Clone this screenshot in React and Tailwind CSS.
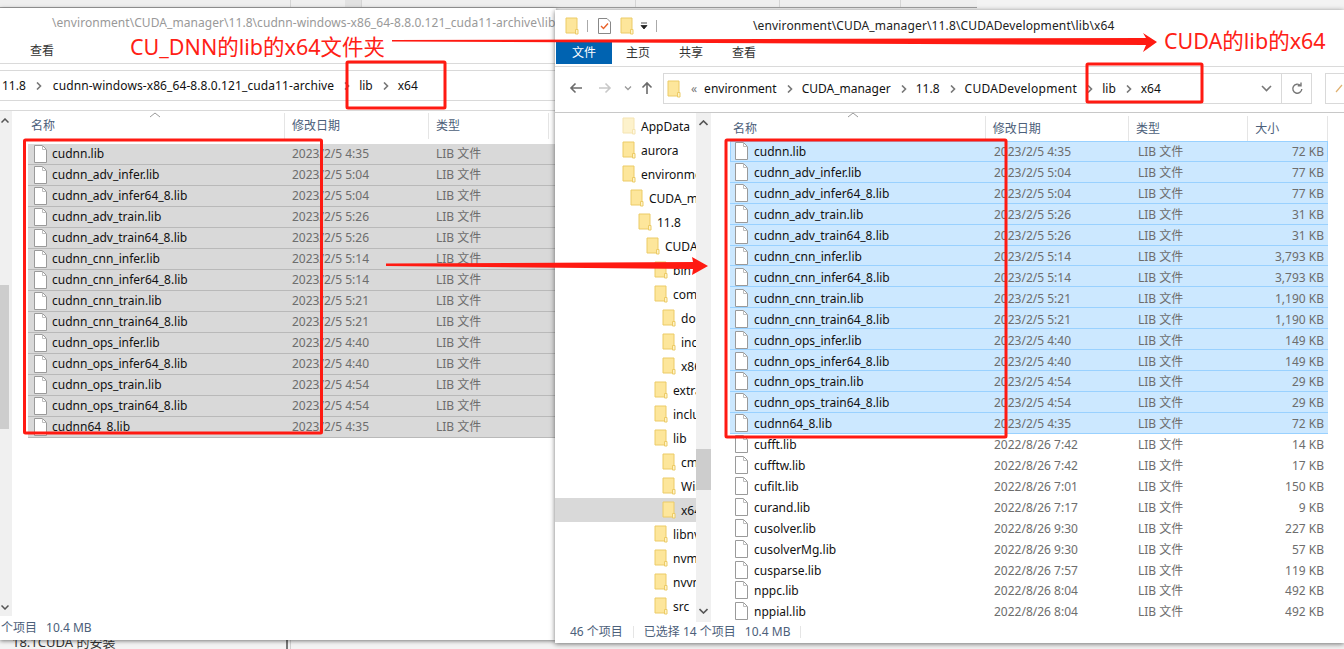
const FONT = "font-['Noto_Sans','Noto_Sans_CJK_SC',sans-serif]";

const selected = [
  ["cudnn.lib", "2023/2/5 4:35", "72 KB"],
  ["cudnn_adv_infer.lib", "2023/2/5 5:04", "77 KB"],
  ["cudnn_adv_infer64_8.lib", "2023/2/5 5:04", "77 KB"],
  ["cudnn_adv_train.lib", "2023/2/5 5:26", "31 KB"],
  ["cudnn_adv_train64_8.lib", "2023/2/5 5:26", "31 KB"],
  ["cudnn_cnn_infer.lib", "2023/2/5 5:14", "3,793 KB"],
  ["cudnn_cnn_infer64_8.lib", "2023/2/5 5:14", "3,793 KB"],
  ["cudnn_cnn_train.lib", "2023/2/5 5:21", "1,190 KB"],
  ["cudnn_cnn_train64_8.lib", "2023/2/5 5:21", "1,190 KB"],
  ["cudnn_ops_infer.lib", "2023/2/5 4:40", "149 KB"],
  ["cudnn_ops_infer64_8.lib", "2023/2/5 4:40", "149 KB"],
  ["cudnn_ops_train.lib", "2023/2/5 4:54", "29 KB"],
  ["cudnn_ops_train64_8.lib", "2023/2/5 4:54", "29 KB"],
  ["cudnn64_8.lib", "2023/2/5 4:35", "72 KB"],
];

const others = [
  ["cufft.lib", "2022/8/26 7:42", "14 KB"],
  ["cufftw.lib", "2022/8/26 7:42", "17 KB"],
  ["cufilt.lib", "2022/8/26 7:01", "150 KB"],
  ["curand.lib", "2022/8/26 7:17", "9 KB"],
  ["cusolver.lib", "2022/8/26 9:30", "227 KB"],
  ["cusolverMg.lib", "2022/8/26 9:30", "57 KB"],
  ["cusparse.lib", "2022/8/26 7:57", "119 KB"],
  ["nppc.lib", "2022/8/26 8:04", "492 KB"],
  ["nppial.lib", "2022/8/26 8:04", "492 KB"],
];

const tree = [
  ["AppData", "pl-[67px]", true],
  ["aurora", "pl-[67px]"],
  ["environment", "pl-[67px]"],
  ["CUDA_manager", "pl-[75px]"],
  ["11.8", "pl-[83px]"],
  ["CUDADevelopment", "pl-[91px]"],
  ["bin", "pl-[99px]"],
  ["compute", "pl-[99px]"],
  ["doc", "pl-[107px]"],
  ["include", "pl-[107px]"],
  ["x86", "pl-[107px]"],
  ["extras", "pl-[99px]"],
  ["include", "pl-[99px]"],
  ["lib", "pl-[99px]"],
  ["cmake", "pl-[107px]"],
  ["Win32", "pl-[107px]"],
  ["x64", "pl-[107px]", false, true],
  ["libnvvp", "pl-[99px]"],
  ["nvml", "pl-[99px]"],
  ["nvvm", "pl-[99px]"],
  ["src", "pl-[99px]"],
];

function FolderIcon({ faded }) {
  return (
    <svg width="14" height="18" viewBox="0 0 14 18" className={`shrink-0 ${faded ? "opacity-50" : ""}`}>
      <path d="M1 1H12V16H1Z" fill="#fde69b" stroke="#eccb66" />
      <path d="M10.5 12.5H13V17H10.5Z" fill="#fff3c8" stroke="#eccb66" />
    </svg>
  );
}

function FileIcon() {
  return (
    <svg width="13" height="18" viewBox="0 0 13 18" className="shrink-0">
      <path d="M.5.5H8.5L12.5 4.5V17.5H.5Z" fill="#fff" stroke="#9a9a9a" />
      <path d="M8.5.5V4.5H12.5" fill="none" stroke="#bdbdbd" />
    </svg>
  );
}

function Chevron({ className = "ml-[10px] mr-[9px]" }) {
  return (
    <svg width="6" height="8" viewBox="0 0 6 8" className={`shrink-0 ${className}`}>
      <path d="M1 0.5L4.5 4L1 7.5" fill="none" stroke="#777" strokeWidth="1.6" />
    </svg>
  );
}

function SortCaret() {
  return (
    <svg width="12" height="6" viewBox="0 0 12 6" className="absolute top-[-1px]">
      <path d="M1 5L6 1L11 5" fill="none" stroke="#9a9a9a" />
    </svg>
  );
}

function LeftRow({ name, date }) {
  return (
    <div className="flex items-center h-[21px] bg-[#d9d9d9] border-b border-[#b9b9b9] pl-[6px] text-[12px]">
      <FileIcon />
      <span className="ml-[5px] w-[240px] text-[#111] whitespace-nowrap">{name}</span>
      <span className="w-[144px] text-[#6d6d6d]">{date}</span>
      <span className="text-[#6d6d6d]">LIB 文件</span>
    </div>
  );
}

function RightRow({ name, date, size, sel, first }) {
  const rowClass = sel
    ? `bg-[#cce8ff] shadow-[inset_0_-1px_0_#99d1ff] ${first ? "outline outline-1 -outline-offset-1 outline-[#99d1ff]" : ""}`
    : "bg-white";
  return (
    <div className={`flex items-center h-[21px] pl-[5px] pr-[4px] text-[12px] ${rowClass}`}>
      <FileIcon />
      <span className="ml-[6px] mt-[2px] w-[240px] text-[#111] whitespace-nowrap">{name}</span>
      <span className="mt-[2px] w-[144px] text-[#6d6d6d] whitespace-nowrap">{date}</span>
      <span className="mt-[2px] w-[100px] text-[#6d6d6d]">LIB 文件</span>
      <span className="mt-[2px] flex-1 text-right text-[#6d6d6d] whitespace-nowrap">{size}</span>
    </div>
  );
}

function HeaderCell({ label, className }) {
  return (
    <div className={`h-full flex items-center pl-[7px] border-r border-[#e5e5e5] text-[12px] text-[#4c607a] ${className}`}>
      {label}
    </div>
  );
}

function LeftWindow() {
  return (
    <div className="absolute left-0 top-[8px] w-[556px] h-[632px] bg-white shadow-[0_1px_4px_rgba(0,0,0,0.5)] flex flex-col overflow-hidden">
      <div className="h-[30px] shrink-0 pl-[52px] pt-[6px] text-[12px] tracking-[0.06px] text-[#999] whitespace-nowrap">
        \environment\CUDA_manager\11.8\cudnn-windows-x86_64-8.8.0.121_cuda11-archive\lib
      </div>
      <div className="h-[26px] shrink-0 pl-[30px] pt-[4px] text-[12px] text-[#333] border-b border-[#dadada]">查看</div>
      <div className="h-[46px] shrink-0 flex items-start pt-[6px]">
        <div className="w-full h-[31px] border-y border-[#d9d9d9] flex items-center pl-[2px] text-[12px] text-[#111] whitespace-nowrap">
          <span>11.8</span>
          <Chevron className="ml-[10px] mr-[11px]" />
          <span className="tracking-[0.09px]">cudnn-windows-x86_64-8.8.0.121_cuda11-archive</span>
          <Chevron className="ml-[10px] mr-[9px]" />
          <span>lib</span>
          <Chevron className="ml-[10px] mr-[9px]" />
          <span>x64</span>
        </div>
      </div>
      <div className="flex-1 flex min-h-0 border-t border-[#d9d9d9]">
        <div className="w-[12px] shrink-0 bg-[#f0f0f0] flex flex-col">
          <svg width="8" height="5" viewBox="0 0 8 5" className="ml-[1px] mt-[7px]">
            <path d="M.5 4.5L4 1L7.5 4.5" fill="none" stroke="#555" strokeWidth="1.5" />
          </svg>
          <div className="mt-[162px] w-[9px] h-[144px] bg-[#cdcdcd]" />
          <svg width="8" height="5" viewBox="0 0 8 5" className="ml-[1px] mt-auto mb-[6px]">
            <path d="M.5.5L4 4L7.5.5" fill="none" stroke="#555" strokeWidth="1.5" />
          </svg>
        </div>
        <div className="flex-1 flex flex-col min-w-0">
          <div className="relative h-[33px] shrink-0 flex items-stretch pl-[12px] pt-[2px] pb-[5px]">
            <div className="absolute left-[137px] top-[2px] w-[12px]">
              <SortCaret />
            </div>
            <HeaderCell label="名称" className="w-[261px]" />
            <HeaderCell label="修改日期" className="w-[144px]" />
            <HeaderCell label="类型" className="w-[120px]" />
          </div>
          <div className="pl-[16px]">
            {selected.map((f) => (
              <LeftRow key={f[0]} name={f[0]} date={f[1]} />
            ))}
          </div>
        </div>
      </div>
      <div className="h-[24px] shrink-0 flex items-center pl-[1px] text-[12px] text-[#4c607a] bg-white">
        <span>个项目</span>
        <span className="ml-[9px]">10.4 MB</span>
      </div>
    </div>
  );
}

function RightWindow() {
  return (
    <div className="absolute left-[555px] top-[10px] right-0 h-[633px] bg-white shadow-[0_1px_5px_rgba(0,0,0,0.55)] flex flex-col overflow-hidden">
      <div className="h-[31px] shrink-0 flex items-center pl-[10px] text-[12px] text-[#222]">
        <FolderIcon />
        <span className="w-px h-[12px] bg-[#aaa] ml-[8px] mr-[10px]" />
        <svg width="13" height="16" viewBox="0 0 13 16" className="mr-[9px]">
          <path d="M.5.5H9L12.5 4V15.5H.5Z" fill="#fff" stroke="#888" />
          <path d="M3 8L5.5 10.5L10 5.5" fill="none" stroke="#e8622a" strokeWidth="1.4" />
        </svg>
        <FolderIcon />
        <svg width="8" height="8" viewBox="0 0 8 8" className="ml-[6px]">
          <path d="M1 1H7M1 3.5H7L4 7Z" fill="#222" stroke="#222" strokeWidth="0.8" />
        </svg>
        <span className="w-px h-[12px] bg-[#aaa] ml-[8px]" />
        <span className="ml-[96px] tracking-[0.14px] whitespace-nowrap">\environment\CUDA_manager\11.8\CUDADevelopment\lib\x64</span>
      </div>
      <div className="h-[26px] shrink-0 flex items-start pl-px text-[12px] text-[#333] border-b border-[#dadada]">
        <div className="w-[56px] h-[23px] bg-[#0063b1] text-white flex items-center justify-center">文件</div>
        <div className="ml-[14px] h-[23px] flex items-center">主页</div>
        <div className="ml-[29px] h-[23px] flex items-center">共享</div>
        <div className="ml-[29px] h-[23px] flex items-center">查看</div>
      </div>
      <div className="h-[46px] shrink-0 flex items-start pt-[6px] border-b border-[#c8c8c8]">
        <svg width="14" height="12" viewBox="0 0 14 12" className="ml-[14px] mt-[9px]">
          <path d="M13 6H2M6.5 1.5L2 6L6.5 10.5" fill="none" stroke="#6b6b6b" strokeWidth="1.6" />
        </svg>
        <svg width="14" height="12" viewBox="0 0 14 12" className="ml-[15px] mt-[9px]">
          <path d="M1 6H12M7.5 1.5L12 6L7.5 10.5" fill="none" stroke="#c8c8c8" strokeWidth="1.6" />
        </svg>
        <svg width="8" height="5" viewBox="0 0 8 5" className="ml-[12px] mt-[13px]">
          <path d="M1 .5L4 3.5L7 .5" fill="none" stroke="#999" strokeWidth="1.3" />
        </svg>
        <svg width="12" height="14" viewBox="0 0 12 14" className="ml-[9px] mt-[8px]">
          <path d="M6 13V2M1.5 6.5L6 2L10.5 6.5" fill="none" stroke="#6b6b6b" strokeWidth="1.6" />
        </svg>
        <div className="ml-[10px] w-[649px] h-[31px] border border-[#d9d9d9] flex items-center pl-[3px] text-[12px] text-[#111] whitespace-nowrap">
          <FolderIcon />
          <span className="ml-[10px] text-[#777]">«</span>
          <span className="ml-[7px]">environment</span>
          <Chevron />
          <span>CUDA_manager</span>
          <Chevron />
          <span>11.8</span>
          <Chevron />
          <span className="tracking-[0.3px]">CUDADevelopment</span>
          <Chevron />
          <span>lib</span>
          <Chevron />
          <span>x64</span>
          <div className="ml-auto flex items-center h-full">
            <svg width="11" height="7" viewBox="0 0 11 7" className="mr-[9px]">
              <path d="M1 1L5.5 5.5L10 1" fill="none" stroke="#777" strokeWidth="1.6" />
            </svg>
          </div>
          <div className="w-[30px] h-full border-l border-[#d9d9d9] flex items-center justify-center">
            <svg width="12" height="13" viewBox="0 0 12 13">
              <path d="M9.5 3.5A4.5 4.5 0 1 0 10.8 7M10 .5V3.8H6.7" fill="none" stroke="#777" strokeWidth="1.4" />
            </svg>
          </div>
        </div>
        <div className="ml-[13px] flex-1 h-[31px] border-y border-l border-[#d9d9d9] flex items-center justify-end pr-[1px]">
          <svg width="9" height="10" viewBox="0 0 9 10">
            <path d="M8 1L2 8" stroke="#e0b070" strokeWidth="1.2" />
          </svg>
        </div>
      </div>
      <div className="flex-1 flex min-h-0">
        <div className="w-[141px] shrink-0 overflow-hidden pt-[1px] text-[12px] text-[#111]">
          {tree.map((t) => (
            <div
              key={t[0] + t[1]}
              className={`flex items-center h-[24px] whitespace-nowrap overflow-hidden ${t[1]} ${t[3] ? "bg-[#d9d9d9]" : ""}`}
            >
              <FolderIcon faded={t[2]} />
              <span className="ml-[5px] mt-[1px]">{t[0]}</span>
            </div>
          ))}
        </div>
        <div className="w-[15px] shrink-0 bg-[#f0f0f0] flex flex-col items-center">
          <svg width="9" height="6" viewBox="0 0 9 6" className="mt-[7px]">
            <path d="M.5 5L4.5 1L8.5 5" fill="none" stroke="#555" strokeWidth="1.6" />
          </svg>
          <div className="mt-[323px] w-full h-[41px] bg-[#cdcdcd]" />
          <svg width="9" height="6" viewBox="0 0 9 6" className="mt-auto mb-[8px]">
            <path d="M.5 1L4.5 5L8.5 1" fill="none" stroke="#555" strokeWidth="1.6" />
          </svg>
        </div>
        <div className="flex-1 min-w-0 flex flex-col overflow-hidden pl-[19px] pr-[16px]">
          <div className="relative h-[28px] shrink-0 flex items-stretch pt-[3px] -ml-[4px]">
            <div className="absolute left-[121px] top-0 w-[12px]">
              <SortCaret />
            </div>
            <HeaderCell label="名称" className="w-[261px]" />
            <HeaderCell label="修改日期" className="w-[144px]" />
            <HeaderCell label="类型" className="w-[120px]" />
            <HeaderCell label="大小" className="w-[80px]" />
          </div>
          {selected.map((f, i) => (
            <RightRow key={f[0]} name={f[0]} date={f[1]} size={f[2]} sel first={i === 0} />
          ))}
          {others.map((f) => (
            <RightRow key={f[0]} name={f[0]} date={f[1]} size={f[2]} />
          ))}
        </div>
      </div>
      <div className="h-[21px] shrink-0 flex items-center pl-[15px] pb-[2px] text-[12px] text-[#4c607a] bg-white">
        <span>46 个项目</span>
        <span className="w-px h-[12px] bg-[#e5e5e5] mx-[10px]" />
        <span>已选择 14 个项目</span>
        <span className="ml-[9px]">10.4 MB</span>
        <span className="w-px h-[12px] bg-[#e5e5e5] ml-[10px]" />
      </div>
    </div>
  );
}

function Annotations() {
  return (
    <>
      <svg width="1344" height="649" viewBox="0 0 1344 649" className="absolute left-0 top-0 pointer-events-none">
        <g fill="none" stroke="#ff1a12" strokeWidth="3" strokeLinejoin="round">
          <rect x="24.5" y="140" width="297" height="293" rx="1" />
          <rect x="347" y="62" width="98" height="46" rx="1" />
          <rect x="726" y="140" width="280" height="297" rx="1" />
          <rect x="1087" y="64" width="115" height="38" rx="1" />
        </g>
        <path d="M392 40L1146 38L1143 33L1157 42L1143 52L1146 45L392 41.5Z" fill="#ff1a12" />
        <path d="M386 263.5L693 262L692 257L708 266L692 275L693 269L386 266Z" fill="#ff1a12" />
      </svg>
      <div className="absolute left-[130px] top-[33px] text-[21.5px] leading-[28px] text-[#ff2015] whitespace-nowrap">
        CU_DNN的lib的x64文件夹
      </div>
      <div className="absolute left-[1164px] top-[27px] text-[21.5px] leading-[28px] text-[#ff2015] whitespace-nowrap">
        CUDA的lib的x64
      </div>
    </>
  );
}

// what shows of the windows behind the two explorers
function Backdrop() {
  return (
    <>
      <div className="absolute left-0 top-0 w-[977px] h-[8px] bg-[#efefef] border-b border-[#a0a0a0] flex">
        <div className="w-[291px] border-r border-[#d5d5d5]" />
        <div className="w-[54px]" />
        <div className="w-[17px] bg-[#e2e2e2] border-r border-[#d5d5d5]" />
        <div className="w-[274px] border-r border-[#d5d5d5]" />
        <div className="w-[144px] border-r border-[#d5d5d5]" />
        <div className="w-[121px] border-r border-[#d5d5d5]" />
      </div>
      <div className="absolute left-[12px] top-[633px] text-[13px] text-[#333] whitespace-nowrap">18.1CUDA 的安装</div>
      <div className="absolute left-[286px] top-[640px] w-[2px] h-[9px] bg-[#777]" />
      <div className="absolute left-[290px] top-[640px] w-px h-[9px] bg-[#d0d0d0]" />
    </>
  );
}

export default function App() {
  return (
    <div className={`relative w-[1344px] h-[649px] overflow-hidden bg-[#f3f3f3] ${FONT}`}>
      <Backdrop />
      <LeftWindow />
      <RightWindow />
      <Annotations />
    </div>
  );
}
